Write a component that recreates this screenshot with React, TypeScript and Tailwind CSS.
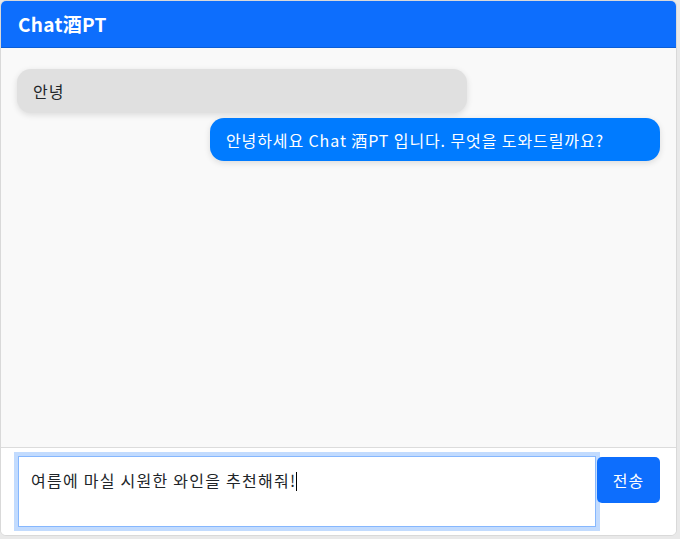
import React from "react";

export default function App() {
  const font = { fontFamily: '"Noto Sans CJK KR", "Noto Sans", sans-serif' };
  return (
    <div className="w-[680px] h-[539px] bg-[#e9e9e9]" style={font}>
      <div className="w-[677px] h-[536px] flex flex-col bg-white border border-[#d9d9d9] rounded-[6px] overflow-hidden">
        <div className="h-[47px] shrink-0 bg-[#0d6efd] border-b border-[#0b5ed7] flex items-center px-[17px]">
          <span className="text-white text-[19px] font-bold tracking-[0.3px]">Chat酒PT</span>
        </div>
        <div className="flex-1 bg-[#f9f9f9] px-[16px] pt-[21px] flex flex-col gap-[5px]">
          <div className="w-[70%] h-[44px] bg-[#e0e0e0] rounded-[14px] shadow-[0_2px_6px_rgba(0,0,0,0.12)] flex items-center px-[16px] text-[16px] tracking-[1px] text-[#212529]">
            안녕
          </div>
          <div className="self-end w-[70%] h-[43px] bg-[#007bff] rounded-[14px] shadow-[0_2px_6px_rgba(0,0,0,0.12)] flex items-center px-[16px] text-[16px] tracking-[0.9px] text-white">
            안녕하세요 Chat 酒PT 입니다. 무엇을 도와드릴까요?
          </div>
        </div>
        <div className="h-[88px] shrink-0 border-t border-[#dcdcdc] bg-white flex items-start pl-[17px] pr-[16px] pt-[8px]">
          <div className="w-[579px] h-[71px] border border-[#86b7fe] shadow-[0_0_0_4px_rgba(13,110,253,0.25)] bg-white px-[12px] pt-[11px] text-[16px] tracking-[1.25px] text-[#212529] flex items-start">
            <span>여름에 마실 시원한 와인을 추천해줘!</span>
            <span className="inline-block w-px h-[19px] bg-black mt-[4px]"></span>
          </div>
          <button className="w-[63px] h-[46px] ml-px bg-[#0d6efd] rounded-[5px] text-white text-[16px] tracking-[1px] mt-[1px]">
            전송
          </button>
        </div>
      </div>
    </div>
  );
}
